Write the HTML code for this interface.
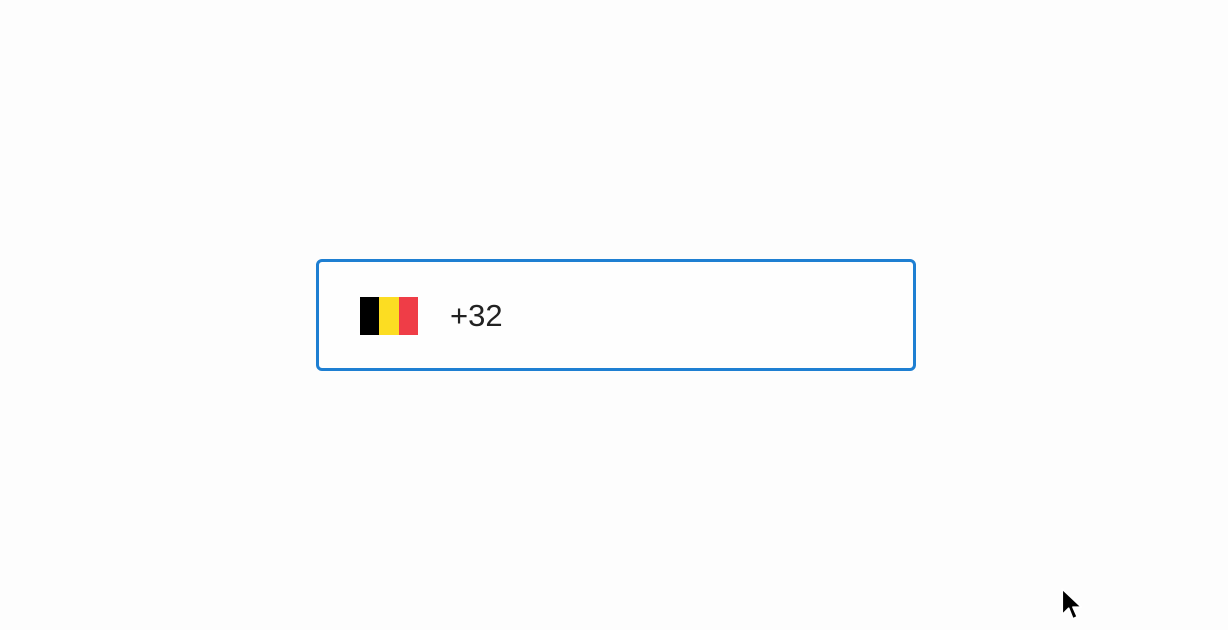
<!DOCTYPE html>
<html><head><meta charset="utf-8"><style>
html,body{margin:0;padding:0;width:1228px;height:630px;background:#fdfdfd;overflow:hidden;position:relative;font-family:"Liberation Sans",Arial,sans-serif}
.box{position:absolute;left:316px;top:259px;width:594px;height:106px;border:3px solid #1e7fd2;border-radius:6px;background:#fefefe}
.flag{position:absolute;left:360px;top:297px;width:58px;height:38px;display:flex}
.flag div{flex:1}
.txt{position:absolute;left:450px;top:297px;font-size:31px;color:#222;line-height:38px}
</style></head><body>
<div class="box"></div>
<div class="flag"><div style="background:#000"></div><div style="background:#fcdd22"></div><div style="background:#ef3d47"></div></div>
<div class="txt">+32</div>
<svg style="position:absolute;left:1058px;top:585px" width="32" height="40" viewBox="0 0 30 36">
<path d="M4 3 L4 27 L10 21 L14 31 L18 29 L14 20 L22 20 Z" fill="#000" stroke="#fff" stroke-width="1.5" stroke-linejoin="round"/>
</svg>
</body></html>
